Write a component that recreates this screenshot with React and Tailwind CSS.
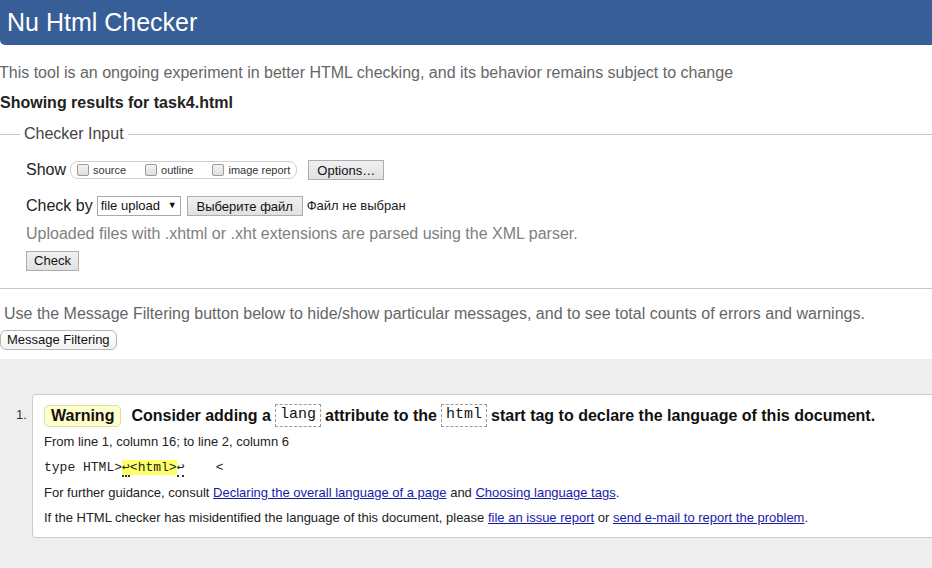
import React from 'react';

const sans = "font-['Liberation_Sans',Arial,sans-serif]";
const mono = "font-['Liberation_Mono','DejaVu_Sans_Mono',monospace]";

function Box({ label }) {
  return (
    <span className="inline-flex items-center gap-[4px] mr-[19px] last:mr-0">
      <span className="inline-block w-[12px] h-[12px] rounded-[2px] border border-[#9a9a9a] bg-gradient-to-b from-[#f4f4f4] to-[#dedede]" />
      <span className="text-[11px] text-[#333]">{label}</span>
    </span>
  );
}

function WinButton({ children, className = '' }) {
  return (
    <button className={`h-[20px] px-[7px] border border-[#adadad] bg-gradient-to-b from-[#f0f0f0] to-[#e1e1e1] text-[13px] text-[#111] leading-none ${className}`}>
      {children}
    </button>
  );
}

export default function App() {
  return (
    <div className={`w-[932px] h-[568px] overflow-hidden bg-white flex flex-col ${sans}`}>
      {/* Header */}
      <div className="h-[45px] shrink-0 bg-[#375e97] rounded-bl-[5px] flex items-center px-[7px]">
        <h1 className="text-white text-[25px] leading-none">Nu Html Checker</h1>
      </div>

      <p className="mt-[19px] -ml-[1px] text-[16px] leading-[18px] text-[#666] whitespace-nowrap">
        This tool is an ongoing experiment in better HTML checking, and its behavior remains subject to change
      </p>
      <p className="mt-[12px] text-[16px] leading-[18px] font-bold text-[#222] whitespace-nowrap">Showing results for task4.html</p>

      {/* Checker input */}
      <fieldset className="mt-[13px] border-t border-b border-[#c8c8c8] pb-[16px]">
        <legend className="ml-[20px] px-[4px] text-[16px] leading-[18px] text-[#444]">Checker Input</legend>

        <div className="pl-[26px]">
          <div className="mt-[17px] flex items-center h-[20px]">
            <span className="text-[16px] text-[#222] mr-[4px]">Show</span>
            <span className="h-[18px] flex items-center pl-[6px] pr-[6px] border border-[#cfcfcf] rounded-[8px]">
              <Box label="source" />
              <Box label="outline" />
              <Box label="image report" />
            </span>
            <WinButton className="ml-[11px] w-[76px]">Options…</WinButton>
          </div>

          <div className="mt-[16px] flex items-center h-[20px]">
            <span className="text-[16px] text-[#222] mr-[4px]">Check by</span>
            <span className="h-[20px] w-[84px] flex items-center justify-between border border-[#a9a9a9] bg-white px-[3px] text-[13px] text-[#111]">
              file upload <span className="text-[9px]">▼</span>
            </span>
            <WinButton className="ml-[6px] w-[116px]">Выберите файл</WinButton>
            <span className="ml-[4px] text-[13px] text-[#222]">Файл не выбран</span>
          </div>

          <p className="mt-[9px] text-[16px] leading-[18px] text-[#808080]">
            Uploaded files with .xhtml or .xht extensions are parsed using the XML parser.
          </p>

          <div className="mt-[5px]">
            <WinButton className="w-[53px]">Check</WinButton>
          </div>
        </div>
      </fieldset>

      <p className="mt-[16px] ml-[4px] text-[16px] leading-[18px] text-[#666] whitespace-nowrap">
        Use the Message Filtering button below to hide/show particular messages, and to see total counts of errors and warnings.
      </p>
      <div className="mt-[4px]">
        <button className="h-[20px] px-[6px] border border-[#b5b5b5] rounded-[6px] bg-gradient-to-b from-white to-[#f3f3f3] text-[13px] text-[#111] leading-none">
          Message Filtering
        </button>
      </div>

      {/* Results */}
      <div className="mt-[8px] flex-1 bg-[#eeeeee] pt-[35px] pl-[16px]">
        <div className="flex items-start">
          <span className="w-[16px] shrink-0 mt-[14px] text-[13px] leading-none text-[#333]">1.</span>
          <div className="w-[920px] shrink-0 bg-white border border-[#cccccc] rounded-[4px] pl-[11px] pt-[9px] pb-[12px]">
            <div className="flex items-center h-[23px] text-[16px] font-bold text-[#111] whitespace-nowrap">
              <span className="h-[22px] flex items-center px-[6px] bg-[#ffffcc] border border-[#e2dca0] rounded-[5px]">Warning</span>
              <span className="ml-[10px]">Consider adding a</span>
              <code className={`mx-[4px] h-[23px] flex items-center px-[4px] border border-dashed border-[#9a9a9a] font-normal text-[15px] ${mono}`}>lang</code>
              <span>attribute to the</span>
              <code className={`mx-[4px] h-[23px] flex items-center px-[4px] border border-dashed border-[#9a9a9a] font-normal text-[15px] ${mono}`}>html</code>
              <span>start tag to declare the language of this document.</span>
            </div>
            <p className="mt-[7px] text-[13px] leading-[15px] text-[#222]">From line 1, column 16; to line 2, column 6</p>
            <p className={`mt-[10px] text-[13px] leading-[17px] text-[#222] whitespace-pre ${mono}`}>
              type HTML&gt;<span className="bg-[#ffff66]"><span className="border-b-2 border-dotted border-[#333]">↩</span>&lt;html&gt;</span><span className="border-b-2 border-dotted border-[#333]">↩</span>{'    <'}
            </p>
            <p className="mt-[9px] text-[13px] leading-[15px] text-[#222]">
              For further guidance, consult <a className="text-[#1a1aa8] underline">Declaring the overall language of a page</a> and <a className="text-[#1a1aa8] underline">Choosing language tags</a>.
            </p>
            <p className="mt-[10px] text-[13px] leading-[15px] text-[#222]">
              If the HTML checker has misidentified the language of this document, please <a className="text-[#1a1aa8] underline">file an issue report</a> or <a className="text-[#1a1aa8] underline">send e-mail to report the problem</a>.
            </p>
          </div>
        </div>
      </div>
    </div>
  );
}
